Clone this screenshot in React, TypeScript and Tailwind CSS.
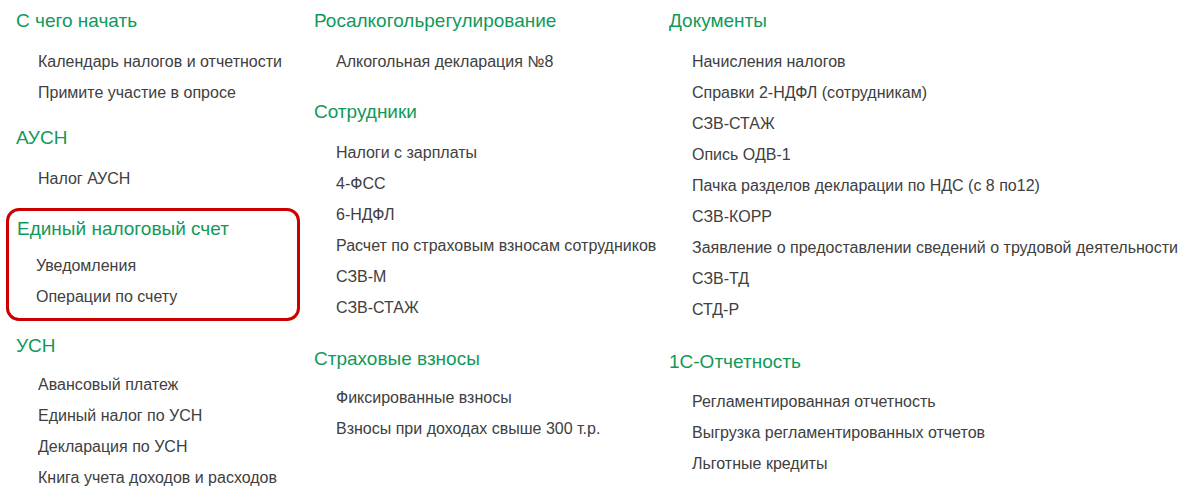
import React from 'react';

type Group = { title: string; items: string[]; mt: string; itemsMt?: string; boxed?: boolean };

const font = { fontFamily: '"Liberation Sans", Arial, sans-serif' };

function Header({ title }: { title: string }) {
  return <div className="text-[19px] leading-[24px] text-[#11995a]">{title}</div>;
}

function Items({ items, className }: { items: string[]; className: string }) {
  return (
    <ul className={className}>
      {items.map((it) => (
        <li key={it} className="text-[16px] leading-[31px] h-[31px] text-[#404040] whitespace-nowrap">
          {it}
        </li>
      ))}
    </ul>
  );
}

const col1: Group[] = [
  { title: 'С чего начать', items: ['Календарь налогов и отчетности', 'Примите участие в опросе'], mt: 'mt-0' },
  { title: 'АУСН', items: ['Налог АУСН'], mt: 'mt-[18px]' },
  {
    title: 'Единый налоговый счет',
    items: ['Уведомления', 'Операции по счету'],
    mt: 'mt-[14px]',
    boxed: true,
  },
  {
    title: 'УСН',
    items: ['Авансовый платеж', 'Единый налог по УСН', 'Декларация по УСН', 'Книга учета доходов и расходов'],
    mt: 'mt-[13px]',
    itemsMt: 'mt-[11px]',
  },
];

const col2: Group[] = [
  { title: 'Росалкогольрегулирование', items: ['Алкогольная декларация №8'], mt: 'mt-0' },
  {
    title: 'Сотрудники',
    items: ['Налоги с зарплаты', '4-ФСС', '6-НДФЛ', 'Расчет по страховым взносам сотрудников', 'СЗВ-М', 'СЗВ-СТАЖ'],
    mt: 'mt-[23px]',
  },
  {
    title: 'Страховые взносы',
    items: ['Фиксированные взносы', 'Взносы при доходах свыше 300 т.р.'],
    mt: 'mt-[24px]',
    itemsMt: 'mt-[11px]',
  },
];

const col3: Group[] = [
  {
    title: 'Документы',
    items: [
      'Начисления налогов',
      'Справки 2-НДФЛ (сотрудникам)',
      'СЗВ-СТАЖ',
      'Опись ОДВ-1',
      'Пачка разделов декларации по НДС (с 8 по12)',
      'СЗВ-КОРР',
      'Заявление о предоставлении сведений о трудовой деятельности',
      'СЗВ-ТД',
      'СТД-Р',
    ],
    mt: 'mt-0',
  },
  {
    title: '1С-Отчетность',
    items: ['Регламентированная отчетность', 'Выгрузка регламентированных отчетов', 'Льготные кредиты'],
    mt: 'mt-[25px]',
    itemsMt: 'mt-[12px]',
  },
];

function Column({ groups, width, indent }: { groups: Group[]; width: string; indent: string }) {
  return (
    <div className={`flex flex-col ${width}`}>
      {groups.map((g) =>
        g.boxed ? (
          <div
            key={g.title}
            className={`${g.mt} -ml-[10px] w-[294px] border-[3px] border-[#cc0000] rounded-[13px] pl-[8px] pt-[6px] pb-[6px]`}
          >
            <Header title={g.title} />
            <Items items={g.items} className="mt-[9px] pl-[19px]" />
          </div>
        ) : (
          <div key={g.title} className={g.mt}>
            <Header title={g.title} />
            <Items items={g.items} className={`${g.itemsMt ?? 'mt-[13px]'} ${indent}`} />
          </div>
        ),
      )}
    </div>
  );
}

export default function App() {
  return (
    <div className="w-[1185px] h-[492px] bg-white overflow-hidden" style={font}>
      <div className="flex pl-[16px] pt-[9px]">
        <Column groups={col1} width="w-[298px] shrink-0" indent="pl-[22px]" />
        <Column groups={col2} width="w-[355px] shrink-0" indent="pl-[22px]" />
        <Column groups={col3} width="flex-1" indent="pl-[23px]" />
      </div>
    </div>
  );
}
